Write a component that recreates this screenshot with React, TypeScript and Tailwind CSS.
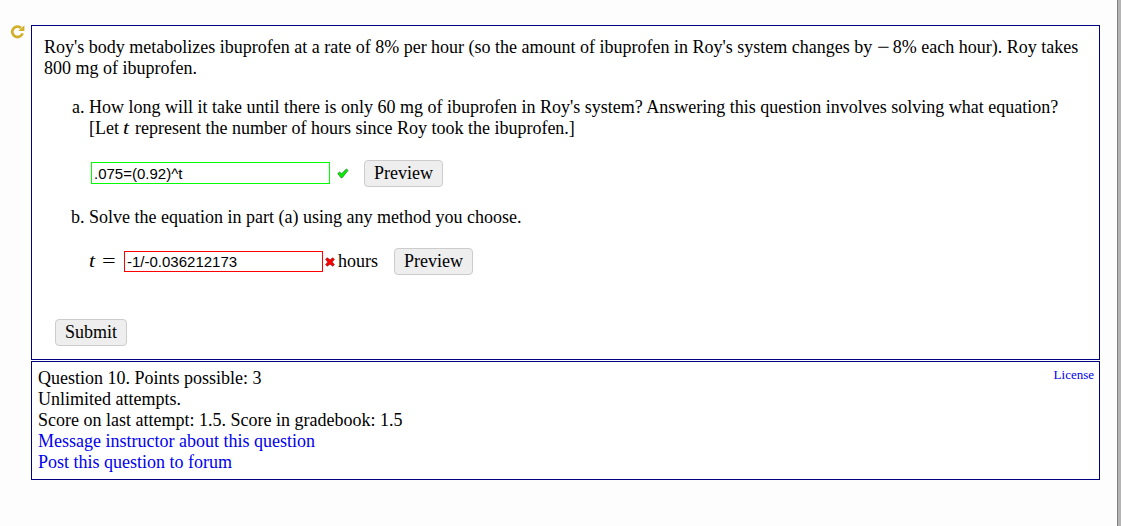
const button =
  "h-[27px] shrink-0 rounded-[4px] border border-[#cccccc] bg-[#eeeeee] text-center leading-[25px]"

function CheckIcon() {
  return (
    <svg width="12" height="11" viewBox="0 0 12 11" className="shrink-0">
      <path
        d="M0.8 5.6 L2.6 4 L4.6 5.7 L9.4 0.9 L11 2.4 L5.2 9.8 L4 9.8 Z"
        fill="#00f000"
        stroke="#2c8a2c"
        strokeWidth="0.8"
        strokeLinejoin="round"
      />
    </svg>
  )
}

function CrossIcon() {
  return (
    <svg width="10" height="10" viewBox="0 0 10 10" className="shrink-0">
      <path
        d="M0.6 2.2 L2.2 0.8 L5 2.8 L7.8 0.8 L9.4 2.2 L7.3 5 L9.4 7.8 L7.8 9.2 L5 7.2 L2.2 9.2 L0.6 7.8 L2.7 5 Z"
        fill="#f80000"
        stroke="#a82020"
        strokeWidth="0.7"
        strokeLinejoin="round"
      />
    </svg>
  )
}

function RefreshIcon() {
  return (
    <svg width="15" height="14" viewBox="0 0 15 14">
      <path d="M12.6 8.4 A5.3 5.2 0 1 1 11 2.8" fill="none" stroke="#d2b02c" strokeWidth="2.8" />
      <path d="M14.4 0.2 V6 H8.2 Z" fill="#d2b02c" />
    </svg>
  )
}

export default function App() {
  return (
    <div className="flex h-[526px] w-[1121px] justify-between overflow-hidden bg-[#fdfdfd] font-['Liberation_Serif',serif] text-[18px] leading-[21px] whitespace-nowrap text-black">
      <div className="flex">
        <div className="w-[31px] pt-[25px] pl-[10px]">
          <RefreshIcon />
        </div>

        <div className="flex w-[1069px] flex-col gap-px pt-[25px]">
          <div className="h-[335px] border border-[#000080] bg-white pt-[11px] pl-3">
            <p>
              Roy's body metabolizes ibuprofen at a rate of 8% per hour (so the amount of ibuprofen in Roy's system changes by <span className="mr-[3px] inline-block w-[13px] origin-left scale-x-125">−</span>8% each hour). Roy takes
            </p>
            <p>800 mg of ibuprofen.</p>

            <div className="mt-[18px] flex">
              <span className="w-[45px] pl-[28px]">a.</span>
              <div>
                <p>How long will it take until there is only 60 mg of ibuprofen in Roy's system? Answering this question involves solving what equation?</p>
                <p>[Let <i className="inline-block w-[7px] origin-left scale-x-120">t</i> represent the number of hours since Roy took the ibuprofen.]</p>
              </div>
            </div>

            <div className="mt-[21px] flex h-[27px] items-center pl-[47px]">
              <input
                className="mb-px h-[22px] w-[239px] border border-[#00ff00] px-[2px] font-['Liberation_Sans',sans-serif] text-[15px] outline-none"
                defaultValue=".075=(0.92)^t"
              />
              <span className="ml-[7px]"><CheckIcon /></span>
              <button className={`ml-[15px] w-[79px] ${button}`}>Preview</button>
            </div>

            <div className="mt-[20px] flex">
              <span className="w-[45px] pl-[27px]">b.</span>
              <p>Solve the equation in part (a) using any method you choose.</p>
            </div>

            <div className="mt-[20px] flex h-[27px] items-center pl-[45px]">
              <span className="flex w-[35px]">
                <i className="w-[13px] origin-left scale-x-120">t</i>
                <span className="origin-left scale-x-135">=</span>
              </span>
              <input
                className="h-[21px] w-[199px] border border-[#ff0000] px-[2px] font-['Liberation_Sans',sans-serif] text-[15px] outline-none"
                defaultValue="-1/-0.036212173"
              />
              <span className="ml-[2px]"><CrossIcon /></span>
              <span className="ml-[3px] w-[56px]">hours</span>
              <button className={`w-[79px] ${button}`}>Preview</button>
            </div>

            <button className={`mt-[44px] ml-[11px] w-[72px] ${button}`}>Submit</button>
          </div>

          <div className="flex h-[119px] justify-between border border-[#000080] bg-white pt-[6px] pr-[5px] pl-[6px]">
            <div>
              <p>Question 10. Points possible: 3</p>
              <p>Unlimited attempts.</p>
              <p>Score on last attempt: 1.5. Score in gradebook: 1.5</p>
              <a className="block text-[#0000ee]">Message instructor about this question</a>
              <a className="block text-[#0000ee]">Post this question to forum</a>
            </div>
            <a className="text-[13px] leading-[14px] text-[#0000ee]">License</a>
          </div>
        </div>
      </div>

      <div className="w-[4px] border-l border-[#808080] bg-[#b4b4b4]" />
    </div>
  )
}
